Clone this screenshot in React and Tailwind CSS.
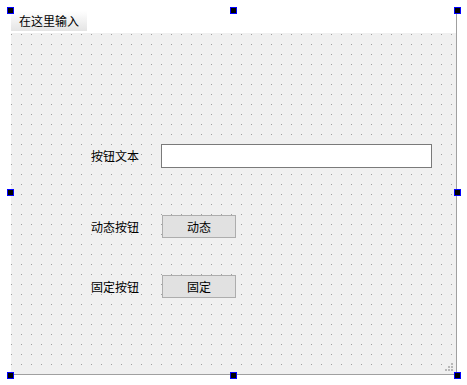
import React from "react";

const font = { fontFamily: '"Noto Sans CJK SC", "Noto Sans", sans-serif' };

function Handle({ className }) {
  return (
    <div
      className={
        "absolute w-[7px] h-[7px] bg-black border border-[#0000ff] " + className
      }
    ></div>
  );
}

function Row({ label, children, className }) {
  return (
    <div className={"flex items-center " + className}>
      <div className="w-[70px] text-[12px] leading-none text-black">{label}</div>
      {children}
    </div>
  );
}

function Button({ text }) {
  return (
    <button className="ml-[1px] w-[74px] h-[23px] bg-[#e1e1e1] border border-[#adadad] text-[12px] leading-none text-black">
      {text}
    </button>
  );
}

export default function App() {
  return (
    <div
      className="relative w-[467px] h-[385px] bg-white overflow-hidden"
      style={font}
    >
      <div className="ml-[11px] mt-[11px] w-[446px] h-[364px] flex flex-col border-r border-b border-[#a0a0a0] relative">
        {/* menu bar */}
        <div className="h-[22px] flex bg-white">
          <div className="w-[76px] h-[20px] pl-[8px] flex items-center text-[12px] leading-none text-black bg-linear-to-b from-white to-[#e4e4e4]">
            在这里输入
          </div>
        </div>
        {/* central widget with designer grid */}
        <div className="flex-1 flex flex-col pl-[80px] pt-[111px] bg-[#f0f0f0] bg-[image:conic-gradient(from_270deg_at_1px_1px,#a0a0a0_90deg,transparent_0)] bg-[size:10px_10px] bg-[position:0_1px]">
          <Row label="按钮文本" className="h-[24px]">
            <input
              className="w-[271px] h-[24px] bg-white border border-[#7a7a7a] outline-none"
              readOnly
            />
          </Row>
          <Row label="动态按钮" className="h-[23px] mt-[47px]">
            <Button text="动态" />
          </Row>
          <Row label="固定按钮" className="h-[23px] mt-[37px]">
            <Button text="固定" />
          </Row>
        </div>
        {/* size grip */}
        <svg
          className="absolute right-[2px] bottom-[2px]"
          width="9"
          height="9"
          viewBox="0 0 9 9"
        >
          <g fill="#b8b8b8">
            <rect x="6" y="0" width="2" height="2" />
            <rect x="3" y="3" width="2" height="2" />
            <rect x="6" y="3" width="2" height="2" />
            <rect x="0" y="6" width="2" height="2" />
            <rect x="3" y="6" width="2" height="2" />
            <rect x="6" y="6" width="2" height="2" />
          </g>
        </svg>
      </div>
      {/* selection handles */}
      <Handle className="left-[7px] top-[7px]" />
      <Handle className="left-[230px] top-[7px]" />
      <Handle className="left-[454px] top-[7px]" />
      <Handle className="left-[7px] top-[189px]" />
      <Handle className="left-[454px] top-[189px]" />
      <Handle className="left-[7px] top-[372px]" />
      <Handle className="left-[230px] top-[372px]" />
      <Handle className="left-[454px] top-[372px]" />
    </div>
  );
}
